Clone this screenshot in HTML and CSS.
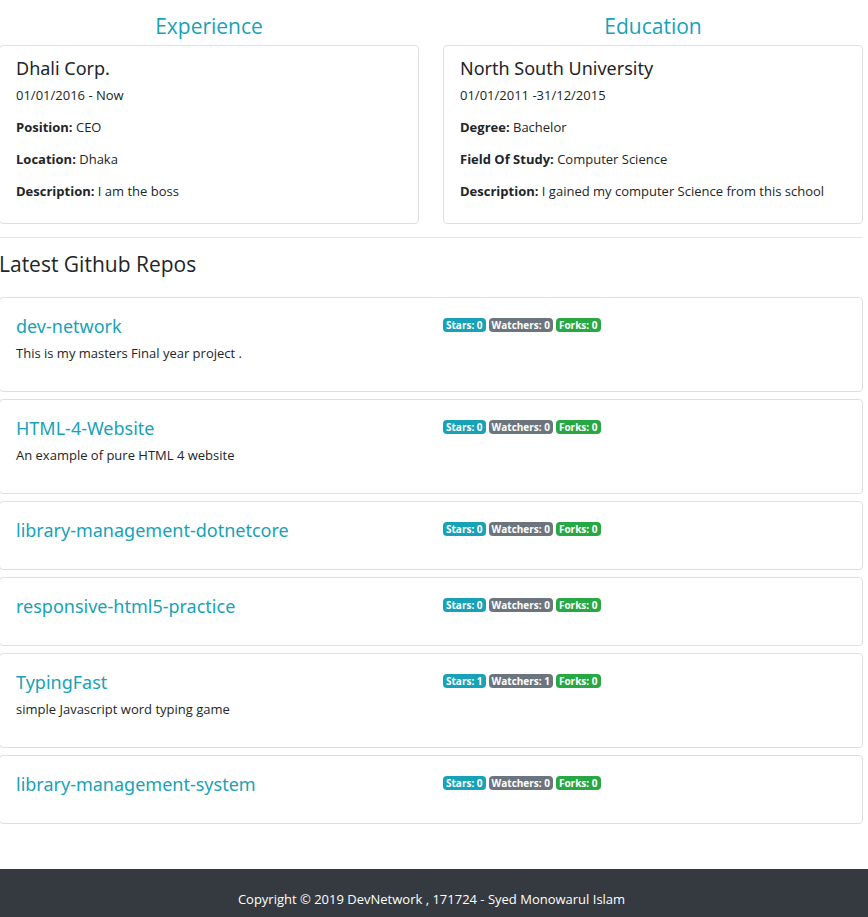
FILE: index.html
```html
<!DOCTYPE html>
<html lang="en">
<head>
<meta charset="utf-8">
<meta name="viewport" content="width=device-width, initial-scale=1">
<title>DevNetwork</title>
<link rel="stylesheet" href="styles.css">
</head>
<body>
<main class="profile">
  <div class="credentials">
    <section>
      <h3 class="section-title">Experience</h3>
      <div class="card credential">
        <h4>Dhali Corp.</h4>
        <p>01/01/2016 - Now</p>
        <p><strong>Position:</strong> CEO</p>
        <p><strong>Location:</strong> Dhaka</p>
        <p><strong>Description:</strong> I am the boss</p>
      </div>
    </section>
    <section>
      <h3 class="section-title">Education</h3>
      <div class="card credential">
        <h4>North South University</h4>
        <p>01/01/2011 -31/12/2015</p>
        <p><strong>Degree:</strong> Bachelor</p>
        <p><strong>Field Of Study:</strong> Computer Science</p>
        <p><strong>Description:</strong> I gained my computer Science from this school</p>
      </div>
    </section>
  </div>
  <section class="repos">
    <h3 class="repos-title">Latest Github Repos</h3>
    <div class="card repo">
      <div class="repo-info"><h4><a href="#">dev-network</a></h4><p>This is my masters Final year project .</p></div>
      <div class="badges"><span class="badge info">Stars: 0</span><span class="badge secondary">Watchers: 0</span><span class="badge success">Forks: 0</span></div>
    </div>
    <div class="card repo">
      <div class="repo-info"><h4><a href="#">HTML-4-Website</a></h4><p>An example of pure HTML 4 website</p></div>
      <div class="badges"><span class="badge info">Stars: 0</span><span class="badge secondary">Watchers: 0</span><span class="badge success">Forks: 0</span></div>
    </div>
    <div class="card repo">
      <div class="repo-info"><h4><a href="#">library-management-dotnetcore</a></h4></div>
      <div class="badges"><span class="badge info">Stars: 0</span><span class="badge secondary">Watchers: 0</span><span class="badge success">Forks: 0</span></div>
    </div>
    <div class="card repo">
      <div class="repo-info"><h4><a href="#">responsive-html5-practice</a></h4></div>
      <div class="badges"><span class="badge info">Stars: 0</span><span class="badge secondary">Watchers: 0</span><span class="badge success">Forks: 0</span></div>
    </div>
    <div class="card repo">
      <div class="repo-info"><h4><a href="#">TypingFast</a></h4><p>simple Javascript word typing game</p></div>
      <div class="badges"><span class="badge info">Stars: 1</span><span class="badge secondary">Watchers: 1</span><span class="badge success">Forks: 0</span></div>
    </div>
    <div class="card repo">
      <div class="repo-info"><h4><a href="#">library-management-system</a></h4></div>
      <div class="badges"><span class="badge info">Stars: 0</span><span class="badge secondary">Watchers: 0</span><span class="badge success">Forks: 0</span></div>
    </div>
  </section>
</main>
<footer class="footer">Copyright © 2019 DevNetwork , 171724 - Syed Monowarul Islam</footer>
</body>
</html>
```
FILE: styles.css
```css
* {
  box-sizing: border-box;
}

body {
  margin: 0;
  background: #fff;
  color: #212529;
  font: 13px/20px "Open Sans", "Noto Sans", sans-serif;
}

h3, h4, p {
  margin: 0;
  font-weight: 400;
}

h3 {
  font-size: 21px;
  line-height: 26px;
}

h4 {
  font-family: "Noto Sans", "Open Sans", sans-serif;
  font-size: 18px;
  line-height: 22px;
}

a {
  color: #17a2b8;
  text-decoration: none;
}

.profile {
  margin-left: -1px;
  padding: 13px 5px 45px 0;
}

.card {
  border: 1px solid #dfdfdf;
  border-radius: 4px;
}

.credentials {
  display: grid;
  grid-template-columns: 1fr 1fr;
  gap: 24px;
}

.section-title {
  margin-bottom: 6px;
  color: #17a2b8;
  text-align: center;
}

.credential {
  padding: 11px 16px 10px;
}

.credential h4 {
  margin-bottom: 6px;
}

.credential p {
  margin-bottom: 12px;
}

.repos {
  margin-top: 13px;
  padding-top: 13px;
  border-top: 1px solid #e5e5e5;
}

.repos-title {
  margin-bottom: 20px;
}

.repo {
  display: grid;
  grid-template-columns: 1fr 1fr;
  gap: 24px;
  margin-bottom: 7px;
  padding: 17px 16px 28px;
}

.repo:last-child {
  margin-bottom: 0;
}

.repo p {
  margin-top: 6px;
}

.badges {
  display: flex;
  gap: 3px;
  align-items: flex-start;
  padding-top: 3px;
}

.badge {
  padding: 0 3px;
  border-radius: 4px;
  color: #fff;
  font-size: 10px;
  font-weight: 700;
  line-height: 14px;
}

.info {
  background: #17a2b8;
}

.secondary {
  background: #6c757d;
}

.success {
  background: #28a745;
}

.footer {
  padding: 20px 5px 8px 0;
  background: #343a40;
  color: #fff;
  text-align: center;
}
```
